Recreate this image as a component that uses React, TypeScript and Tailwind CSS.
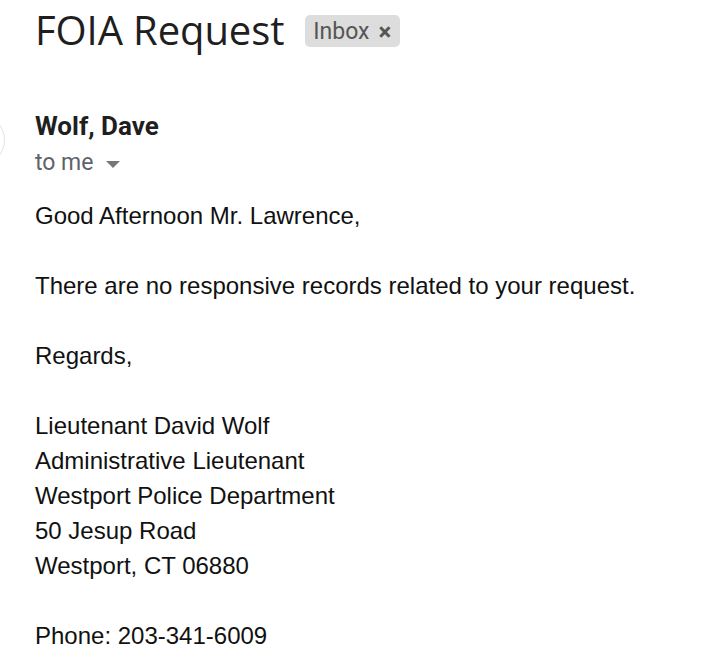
export default function App() {
  const sig = [
    'Lieutenant David Wolf',
    'Administrative Lieutenant',
    'Westport Police Department',
    '50 Jesup Road',
    'Westport, CT 06880',
  ];

  return (
    <div className="w-[720px] h-[658px] bg-white overflow-hidden relative">
      {/* subject line */}
      <div className="flex items-center pl-[35px] pt-[6px] h-[48px] box-content">
        <h1 className="text-[40px] leading-[48px] text-[#1f1f1f] font-['Open_Sans',sans-serif] tracking-[-0.1px]">
          FOIA Request
        </h1>
        <span className="ml-[21px] mt-[1px] flex items-center h-[32px] pl-[8px] pr-[9px] pt-[2px] rounded-[5px] bg-[#dddddd] text-[#555555] text-[23px] leading-none font-['Roboto',sans-serif]">
          Inbox
          <span className="ml-[9px] text-[24px] font-bold leading-none text-[#555]">×</span>
        </span>
      </div>

      {/* sender */}
      <div className="relative mt-[56px] pl-[35px]">
        <div className="absolute left-[-47px] top-[4px] w-[52px] h-[52px] rounded-full border border-[#e3e3e3] bg-white" />
        <div className="text-[26px] leading-[32px] font-bold text-[#1f1f1f] font-['Roboto',sans-serif]">
          Wolf, Dave
        </div>
        <div className="flex items-center text-[23px] leading-[30px] text-[#5f6368] font-['Roboto',sans-serif] mt-[6px]">
          to me
          <svg className="ml-[12px] mt-[2px]" width="14" height="7" viewBox="0 0 14 7">
            <path d="M0 0 L14 0 L7 7 Z" fill="#777" />
          </svg>
        </div>
      </div>

      {/* body */}
      <div className="pl-[35px] mt-[20px] text-[24px] leading-[35px] text-[#111] font-['Liberation_Sans',Arial,sans-serif]">
        <p>Good Afternoon Mr. Lawrence,</p>
        <p className="mt-[35px]">There are no responsive records related to your request.</p>
        <p className="mt-[35px]">Regards,</p>
        <div className="mt-[35px]">
          {sig.map(line => (
            <p key={line}>{line}</p>
          ))}
        </div>
        <p className="mt-[35px]">Phone: 203-341-6009</p>
      </div>
    </div>
  );
}
